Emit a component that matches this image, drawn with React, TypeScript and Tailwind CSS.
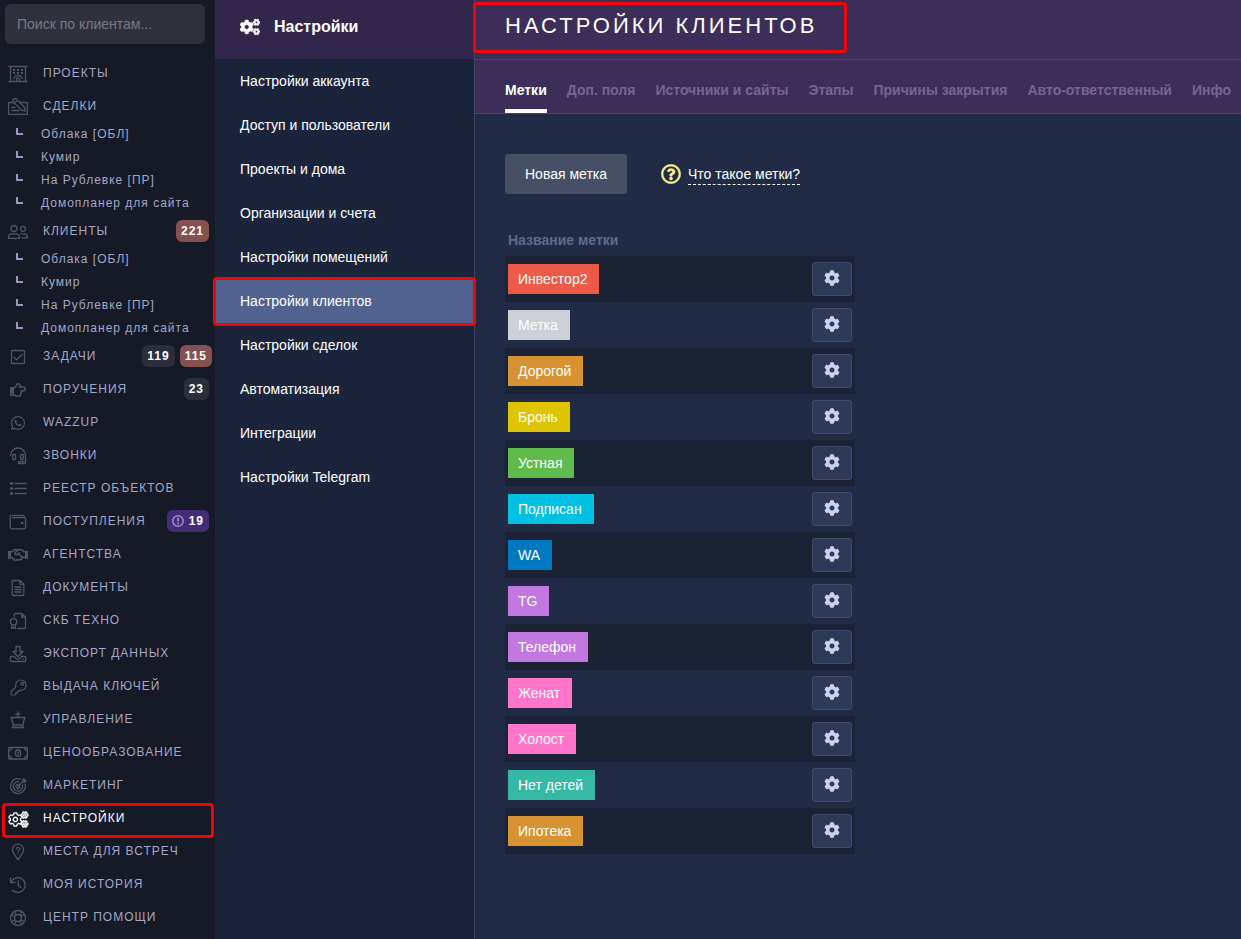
import React, { useState } from 'react'
import { FaCog, FaCogs, FaKey, FaRegHandPointRight, FaRegHandshake, FaRegQuestionCircle, FaWhatsapp } from 'react-icons/fa'

type BadgeTone = 'dark' | 'red' | 'purple'

interface Badge {
  value: number
  tone: BadgeTone
}

interface NavItem {
  label: string
  icon: React.ReactNode
  children?: string[]
  badges?: Badge[]
  highlighted?: boolean
}

const badgeTones: Record<BadgeTone, string> = {
  dark: 'bg-[#2b2e3b]',
  red: 'bg-[#85504f]',
  purple: 'bg-[#432d78]',
}

function LineIcon({ children }: { children: React.ReactNode }) {
  return (
    <svg
      width="20"
      height="20"
      viewBox="0 0 20 20"
      fill="none"
      stroke="currentColor"
      strokeWidth="1.3"
      strokeLinejoin="round"
      strokeLinecap="round"
      aria-hidden="true"
    >
      {children}
    </svg>
  )
}

const projectGroups = ['Облака [ОБЛ]', 'Кумир', 'На Рублевке [ПР]', 'Домопланер для сайта']

const navItems: NavItem[] = [
  {
    label: 'Проекты',
    icon: (
      <LineIcon>
        <path d="M1 2.500h18M1 17.500h18M2.500 2.500v15M17.500 2.500v15" />
        <path d="M5 6h2M9 6h2M13 6h2M5 9h2M13 9h2M9 9h2" strokeWidth="1.800" strokeLinecap="butt" />
        <path d="M6 14.500a4 3 0 0 1 8 0M8.500 17.500v-2a1.500 1.500 0 0 1 3 0v2" />
      </LineIcon>
    ),
  },
  {
    label: 'Сделки',
    children: projectGroups,
    icon: (
      <LineIcon>
        <path d="M4.500 5.500H.6v11.900h18.800V5.500H12" />
        <path d="M4.800 2.800l1.700-1.300 2 .4 8 8.600.7 3.500-3.500-.8-8.400-8.300zM6 6.500l2.500-2.300" />
        <path d="M4 10.500h3M4 13.500h7" />
      </LineIcon>
    ),
  },
  {
    label: 'Клиенты',
    children: projectGroups,
    badges: [{ value: 221, tone: 'red' }],
    icon: (
      <LineIcon>
        <circle cx="6" cy="6.500" r="3" />
        <circle cx="15" cy="6.800" r="2.500" />
        <path d="M.6 16.400v-1.400a3.500 3.500 0 0 1 3.500-3.200h3.800a3.500 3.500 0 0 1 3.500 3.200v1.400z" />
        <path d="M12.800 11.800h3.200a3.300 3.300 0 0 1 3.400 3v1h-5.600" />
      </LineIcon>
    ),
  },
  {
    label: 'Задачи',
    badges: [
      { value: 119, tone: 'dark' },
      { value: 115, tone: 'red' },
    ],
    icon: (
      <LineIcon>
        <rect x="3.500" y="3.500" width="13" height="13" rx="1" />
        <path d="M6 10.200l2.600 2.600L14 7.500" />
      </LineIcon>
    ),
  },
  { label: 'Поручения', badges: [{ value: 23, tone: 'dark' }], icon: <FaRegHandPointRight size={16} /> },
  { label: 'Wazzup', icon: <FaWhatsapp size={16} /> },
  {
    label: 'Звонки',
    icon: (
      <LineIcon>
        <path d="M2.500 9.500a7.500 7.500 0 0 1 15 0v6.500a1.500 1.500 0 0 1-1.500 1.500h-5.500v-1.800h5.500" />
        <rect x="4.700" y="8.500" width="2.800" height="5" rx=".8" />
        <rect x="12.500" y="8.500" width="2.800" height="5" rx=".8" />
      </LineIcon>
    ),
  },
  {
    label: 'Реестр объектов',
    icon: (
      <LineIcon>
        <path d="M7 4.500h11M7 9.500h11M7 14.500h11" strokeWidth="1.500" />
        <path d="M3 4.500h1M3 9.500h1M3 14.500h1" strokeWidth="2.600" />
      </LineIcon>
    ),
  },
  {
    label: 'Поступления',
    badges: [{ value: 19, tone: 'purple' }],
    icon: (
      <LineIcon>
        <path d="M16 5.500V4.300a1 1 0 0 0-1-1H4a1.800 1.800 0 0 0-1.800 1.800v9.900a1.800 1.800 0 0 0 1.800 1.800h11.800a1.800 1.800 0 0 0 1.800-1.800V7.300a1.800 1.800 0 0 0-1.800-1.800H4.500" />
        <circle cx="14.200" cy="11" r=".7" fill="currentColor" />
      </LineIcon>
    ),
  },
  { label: 'Агентства', icon: <FaRegHandshake size={20} /> },
  {
    label: 'Документы',
    icon: (
      <LineIcon>
        <path d="M12 2.500H5.200a1 1 0 0 0-1 1v13a1 1 0 0 0 1 1h9.600a1 1 0 0 0 1-1V6.300zM12 2.500v3.800h3.800" />
        <path d="M7 9h6M7 11.500h6M7 14h6" />
      </LineIcon>
    ),
  },
  {
    label: 'СКБ Техно',
    icon: (
      <LineIcon>
        <path d="M6.200 6V3.500a1 1 0 0 1 1-1h6.600l3.700 3.800v10.200a1 1 0 0 1-1 1H9.500M13.800 2.500v3.800h3.700" />
        <circle cx="5.500" cy="10.800" r="3.200" />
        <path d="M3.700 13.500v4l1.800-1.200 1.800 1.200v-4" />
      </LineIcon>
    ),
  },
  {
    label: 'Экспорт данных',
    icon: (
      <LineIcon>
        <path d="M8 2.500h4v5h3L10 12.800 5 7.500h3z" />
        <path d="M6.500 12.500H3.200a1 1 0 0 0-1 1v3a1 1 0 0 0 1 1h13.600a1 1 0 0 0 1-1v-3a1 1 0 0 0-1-1h-3.300" />
        <path d="M6.500 12.500c1 2 2.200 2.700 3.500 2.700s2.500-.7 3.500-2.700M14.800 15.200h.4" />
      </LineIcon>
    ),
  },
  { label: 'Выдача ключей', icon: <FaKey size={15} fill="none" stroke="currentColor" strokeWidth={40} className="overflow-visible" /> },
  {
    label: 'Управление',
    icon: (
      <LineIcon>
        <path d="M10 2v5M8 4h4M4.500 17.500h11M3.200 7.500h13.600l-2.200 7.500H5.400z" />
        <path d="M5.400 15l-.7 2.500M14.600 15l.7 2.500" />
      </LineIcon>
    ),
  },
  {
    label: 'Ценообразование',
    icon: (
      <LineIcon>
        <rect x=".6" y="4.500" width="18.800" height="11.500" rx=".8" />
        <ellipse cx="10" cy="10.200" rx="2.600" ry="3.200" />
        <path d="M.6 7.500a3 3 0 0 0 3-3M16.400 4.500a3 3 0 0 0 3 3M.6 13a3 3 0 0 1 3 3M16.400 16a3 3 0 0 1 3-3M10 9.200v2" />
      </LineIcon>
    ),
  },
  {
    label: 'Маркетинг',
    icon: (
      <LineIcon>
        <path d="M12.500 3A7.500 7.500 0 1 0 17.200 8M11 5.800A4.700 4.700 0 1 0 14.500 9" />
        <path d="M10.200 8.500a2 2 0 1 0 1.700 1.700M10 10.500l4.500-4.500M14.500 6V4L16 2.500V4.500h2l-1.500 1.500z" />
      </LineIcon>
    ),
  },
  {
    label: 'Настройки',
    highlighted: true,
    icon: <FaCogs size={19} fill="none" stroke="currentColor" strokeWidth={44} className="overflow-visible" />,
  },
  {
    label: 'Места для встреч',
    icon: (
      <LineIcon>
        <path d="M10 17.600C6.500 13 4.400 10.500 4.400 7.800a5.600 5.600 0 0 1 11.200 0c0 2.700-2.100 5.200-5.600 9.800z" />
        <path d="M8.300 6.800c.3-2 3.700-1.700 3.500.2-.1 1.200-1.700 1.200-1.700 2.500M10.100 11.400v.1" />
      </LineIcon>
    ),
  },
  {
    label: 'Моя история',
    icon: (
      <LineIcon>
        <path d="M3 7.300a7.400 7.400 0 1 1 1.500 7.900M2.500 3v4.500H7M10.200 6v4.500l2.600 2" />
      </LineIcon>
    ),
  },
  {
    label: 'Центр помощи',
    icon: (
      <LineIcon>
        <circle cx="10" cy="10" r="7.500" />
        <circle cx="10" cy="10" r="3.500" />
        <path d="M6.200 3.600l2 3.400M3.600 6.200l3.400 2M13.800 3.600l-2 3.400M16.400 6.200l-3.400 2M6.200 16.400l2-3.400M3.600 13.800l3.400-2M13.800 16.400l-2-3.400M16.400 13.800l-3.400-2" />
      </LineIcon>
    ),
  },
]

const settingsSections = [
  'Настройки аккаунта',
  'Доступ и пользователи',
  'Проекты и дома',
  'Организации и счета',
  'Настройки помещений',
  'Настройки клиентов',
  'Настройки сделок',
  'Автоматизация',
  'Интеграции',
  'Настройки Telegram',
]

const tabs = ['Метки', 'Доп. поля', 'Источники и сайты', 'Этапы', 'Причины закрытия', 'Авто-ответственный', 'Инфо']

const tags = [
  { name: 'Инвестор2', color: 'bg-[#ed5a48]' },
  { name: 'Метка', color: 'bg-[#cdd0d6]' },
  { name: 'Дорогой', color: 'bg-[#d79232]' },
  { name: 'Бронь', color: 'bg-[#dfc500]' },
  { name: 'Устная', color: 'bg-[#5fbc4c]' },
  { name: 'Подписан', color: 'bg-[#00c1e2]' },
  { name: 'WA', color: 'bg-[#0079c1]' },
  { name: 'TG', color: 'bg-[#c378e1]' },
  { name: 'Телефон', color: 'bg-[#c378e1]' },
  { name: 'Женат', color: 'bg-[#ff76cb]' },
  { name: 'Холост', color: 'bg-[#ff76cb]' },
  { name: 'Нет детей', color: 'bg-[#35b9a4]' },
  { name: 'Ипотека', color: 'bg-[#d79232]' },
]

function NavBadge({ value, tone }: Badge) {
  return (
    <span className={`flex h-[22px] items-center rounded-md px-[5px] text-xs font-bold tracking-[1px] text-white ${badgeTones[tone]}`}>
      {tone === 'purple' && (
        <svg width="12" height="12" viewBox="0 0 12 12" className="mr-[5px] text-[#a08fc8]" fill="none" stroke="currentColor" aria-hidden="true">
          <circle cx="6" cy="6" r="5.200" strokeWidth="1.500" />
          <path d="M6 2.800v3.700M6 7.800v1.500" strokeWidth="1.800" />
        </svg>
      )}
      {value}
    </span>
  )
}

function Sidebar() {
  return (
    <aside className="w-[215px] shrink-0 bg-[#161926]">
      <div className="pt-1 pr-[10px] pb-3 pl-[5px]">
        <input
          type="search"
          aria-label="Поиск по клиентам"
          placeholder="Поиск по клиентам..."
          className="block h-10 w-full rounded-md bg-[#2f313d] px-3 text-sm text-white outline-none placeholder:text-[#787a83]"
        />
      </div>
      <nav>
        <ul>
          {navItems.map((item) => (
            <li key={item.label} className="relative">
              <a
                href="#"
                className={`flex h-[33px] items-center pl-2 ${(item.badges?.length ?? 0) > 1 ? 'pr-[3px]' : 'pr-[6px]'}`}
              >
                <span className={`flex w-5 justify-center pt-[3px] ${item.highlighted ? 'text-white' : 'text-[#51556a]'}`}>
                  {item.icon}
                </span>
                <span
                  className={`ml-[15px] flex-1 text-xs uppercase tracking-[1px] whitespace-nowrap ${
                    item.highlighted ? 'text-white' : 'text-[#a3a8c6]'
                  }`}
                >
                  {item.label}
                </span>
                {item.badges && (
                  <span className="flex gap-[5px]">
                    {item.badges.map((badge) => (
                      <NavBadge key={badge.value} {...badge} />
                    ))}
                  </span>
                )}
              </a>
              {item.highlighted && (
                <span className="pointer-events-none absolute top-0.5 right-px -bottom-1 left-0.5 rounded-sm border-3 border-[#f00509]" />
              )}
              {item.children && (
                <ul>
                  {item.children.map((child) => (
                    <li key={child}>
                      <a href="#" className="flex h-[23px] items-center pl-4 text-xs tracking-[1px] text-[#a3a8c6]">
                        <span className="mr-[18px] mb-1 size-[7px] border-b-2 border-l-2 border-[#9a96c0]" />
                        {child}
                      </a>
                    </li>
                  ))}
                </ul>
              )}
            </li>
          ))}
        </ul>
      </nav>
    </aside>
  )
}

function SettingsMenu() {
  const active = 'Настройки клиентов'

  return (
    <section className="w-[260px] shrink-0 border-r border-[#3f4563] bg-[#1b243b] text-white">
      <header className="flex h-[59px] items-center gap-[14px] bg-[#33264c] pb-1.5 pl-[25px]">
        <FaCogs size={20} stroke="currentColor" strokeWidth={14} />
        <h2 className="text-base font-bold">Настройки</h2>
      </header>
      <ul>
        {settingsSections.map((section) => (
          <li key={section} className="relative">
            <a href="#" className={`flex h-11 items-center pl-[25px] text-sm ${section === active ? 'bg-[#526392]' : ''}`}>
              {section}
            </a>
            {section === active && (
              <span className="pointer-events-none absolute -inset-x-0.5 -top-0.5 -bottom-[3px] z-10 rounded-sm border-3 border-[#f00509]" />
            )}
          </li>
        ))}
      </ul>
    </section>
  )
}

function TagsTable() {
  return (
    <table className="w-[350px] text-sm">
      <thead>
        <tr className="h-8">
          <th scope="col" className="px-[3px] text-left font-bold text-[#5f6a91]">
            Название метки
          </th>
          <td />
        </tr>
      </thead>
      <tbody>
        {tags.map((tag) => (
          <tr key={tag.name} className="h-[46px] odd:bg-[#1c2334]">
            <td className="px-[3px]">
              <span className={`inline-flex h-[30px] items-center pr-3 pl-[10px] align-middle text-white ${tag.color}`}>{tag.name}</span>
            </td>
            <td className="px-[3px]">
              <button
                type="button"
                aria-label={`Настроить метку ${tag.name}`}
                className="ml-auto flex h-[34px] w-10 items-center justify-center rounded-[3px] border border-[#414b6c] bg-[#2e3857] pb-0.5 text-[#c8d2f2]"
              >
                <FaCog size={16} />
              </button>
            </td>
          </tr>
        ))}
      </tbody>
    </table>
  )
}

export default function App() {
  const [activeTab, setActiveTab] = useState('Метки')

  return (
    <div className="flex min-h-screen overflow-x-hidden bg-[#222b45] font-['Liberation_Sans',Arial,sans-serif]">
      <Sidebar />
      <SettingsMenu />

      <main className="min-w-0 flex-1">
        <header className="relative flex h-[60px] items-center border-b border-[#51416f] bg-[#3d2d59] pb-2 pl-[30px]">
          <h1 className="text-[22px] tracking-[3px] text-white uppercase whitespace-nowrap">Настройки клиентов</h1>
          <span className="pointer-events-none absolute top-0.5 -left-0.5 h-[51px] w-[374px] rounded-sm border-3 border-[#f00509]" />
        </header>

        <div className="flex h-[54px] gap-5 border-b border-[#4b4670] bg-[#3d2d59] pl-[30px]">
          {tabs.map((tab) => (
            <button
              key={tab}
              type="button"
              onClick={() => setActiveTab(tab)}
              className={`border-b-4 pt-[10px] text-sm font-bold whitespace-nowrap ${
                tab === activeTab ? 'border-white text-white' : 'border-transparent text-[#75658f]'
              }`}
            >
              {tab}
            </button>
          ))}
        </div>

        <div className="px-[30px] py-10">
          <div className="mb-[30px] flex items-center gap-[34px]">
            <button type="button" className="h-10 rounded-[3px] bg-[#464f63] px-5 text-sm text-white">
              Новая метка
            </button>
            <a href="#" className="flex items-center gap-[7px] text-sm text-white">
              <FaRegQuestionCircle size={20} stroke="currentColor" strokeWidth={10} className="text-[#faf08a]" />
              <span className="border-b border-dashed border-white pt-px">Что такое метки?</span>
            </a>
          </div>
          <TagsTable />
        </div>
      </main>
    </div>
  )
}
